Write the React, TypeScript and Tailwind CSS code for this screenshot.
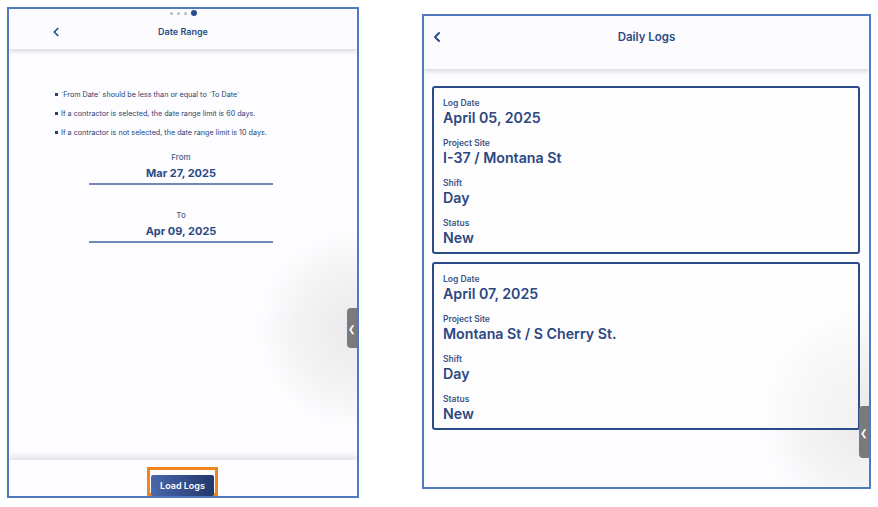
import { ChevronLeft } from 'lucide-react';

const font = { fontFamily: 'Inter, "Open Sans", sans-serif' };

function Glow({ className }: { className: string }) {
  return (
    <div
      className={`absolute rounded-full pointer-events-none bg-[radial-gradient(circle,rgba(0,0,0,0.08)_0%,rgba(0,0,0,0.035)_45%,transparent_70%)] ${className}`}
    />
  );
}

function Handle({ className }: { className: string }) {
  return (
    <div className={`absolute right-0 w-[10px] rounded-l-[4px] bg-[#7a7a7c] flex items-center justify-center ${className}`}>
      <span className="text-white text-[9px] leading-none">&#10094;</span>
    </div>
  );
}

const bullets = [
  '`From Date` should be less than or equal to `To Date`',
  'If a contractor is selected, the date range limit is 60 days.',
  'If a contractor is not selected, the date range limit is 10 days.',
];

function DateRange() {
  return (
    <div className="relative w-[352px] h-[491px] border-2 border-[#5079bf] bg-[#fdfcfe] flex flex-col overflow-hidden">
      <Glow className="w-[200px] h-[200px] -right-[100px] top-[221px]" />
      <div className="relative z-10 h-[40px] bg-[#fcfbfd] shadow-[0_3px_4px_rgba(0,0,0,0.12)] flex items-center">
        <div className="absolute top-[1px] left-1/2 -translate-x-[13px] flex items-center gap-[4px]">
          <span className="w-[3px] h-[3px] rounded-full bg-[#b7bcc8]" />
          <span className="w-[3px] h-[3px] rounded-full bg-[#b7bcc8]" />
          <span className="w-[3px] h-[3px] rounded-full bg-[#b7bcc8]" />
          <span className="w-[6px] h-[6px] rounded-full bg-[#2a4b8d]" />
        </div>
        <ChevronLeft className="ml-[40px] mt-[6px] w-[14px] h-[14px] text-[#2a4b8d]" strokeWidth={3} />
        <div className="flex-1 text-center mt-[6px] pr-[54px] text-[9px] font-semibold text-[#2c4b86]">
          Date Range
        </div>
      </div>
      <div className="relative flex-1 flex flex-col">
        <ul className="pl-[46px] pt-[41px] flex flex-col gap-[10px]">
          {bullets.map((b) => (
            <li key={b} className="flex items-center gap-[3px] text-[7.2px] leading-[9px] text-[#2a3f74]">
              <span className="w-[3px] h-[3px] bg-[#2a3f74]" />
              {b}
            </li>
          ))}
        </ul>
        <div className="mt-[15px] flex flex-col items-center">
          <div className="w-[184px] ml-[-4px] flex flex-col items-center">
            <div className="text-[8px] leading-[10px] text-[#4a5f8c] font-medium">From</div>
            <div className="mt-[4px] text-[11px] leading-[14px] font-bold text-[#2b4a86]">Mar 27, 2025</div>
            <div className="mt-[3px] w-full h-[2px] bg-[#7189b2]" />
            <div className="mt-[25px] text-[8px] leading-[10px] text-[#4a5f8c] font-medium">To</div>
            <div className="mt-[4px] text-[11px] leading-[14px] font-bold text-[#2b4a86]">Apr 09, 2025</div>
            <div className="mt-[3px] w-full h-[2px] bg-[#7189b2]" />
          </div>
        </div>
      </div>
      <Handle className="top-[299px] h-[40px] z-20" />
      <div className="relative z-10 h-[36px] bg-[#fdfcfe] shadow-[0_-4px_6px_rgba(0,0,0,0.10)] flex justify-center items-end">
        <div className="border-[3px] border-[#f0841f] p-[1px] h-[29px] ml-[-1px]">
          <button className="w-[63px] h-[21px] rounded-[2px] bg-gradient-to-r from-[#4a68ab] to-[#22386d] text-white text-[9px] font-semibold">
            Load Logs
          </button>
        </div>
      </div>
    </div>
  );
}

const logs = [
  { date: 'April 05, 2025', site: 'I-37 / Montana St', shift: 'Day', status: 'New' },
  { date: 'April 07, 2025', site: 'Montana St / S Cherry St.', shift: 'Day', status: 'New' },
];

function Field({ label, value }: { label: string; value: string }) {
  return (
    <div className="mb-[11px]">
      <div className="text-[8.5px] leading-[11px] font-semibold text-[#3b5488]">{label}</div>
      <div className="text-[14.2px] leading-[18px] font-semibold text-[#2b4782]">{value}</div>
    </div>
  );
}

function DailyLogs() {
  return (
    <div className="relative w-[449px] h-[475px] border-2 border-[#5079bf] bg-[#fdfcfe] flex flex-col overflow-hidden">
      <Glow className="w-[220px] h-[220px] -right-[110px] top-[290px]" />
      <div className="absolute top-0 left-[374px] w-[20px] h-[1px] bg-[#e88a9c]" />
      <div className="relative z-10 h-[53px] bg-[#fcfbfd] shadow-[0_3px_4px_rgba(0,0,0,0.12)] flex items-start pt-[13px]">
        <ChevronLeft className="ml-[5px] w-[16px] h-[16px] text-[#2a4b8d]" strokeWidth={3} />
        <div className="flex-1 text-center pr-[21px] text-[11.5px] leading-[16px] font-semibold text-[#2c4b86]">
          Daily Logs
        </div>
      </div>
      <div className="relative flex flex-col gap-[8px] pl-[8px] pr-[9px] pt-[17px]">
        {logs.map((l) => (
          <div key={l.date} className="h-[168px] border-2 border-[#2d4a88] rounded-[3px] pl-[9px] pt-[10px] bg-white/40">
            <Field label="Log Date" value={l.date} />
            <Field label="Project Site" value={l.site} />
            <Field label="Shift" value={l.shift} />
            <Field label="Status" value={l.status} />
          </div>
        ))}
      </div>
      <Handle className="top-[390px] h-[52px]" />
    </div>
  );
}

export default function App() {
  return (
    <div className="w-[878px] h-[507px] bg-white flex items-start pl-[7px] pt-[7px]" style={font}>
      <DateRange />
      <div className="ml-[63px] mt-[7px]">
        <DailyLogs />
      </div>
    </div>
  );
}
